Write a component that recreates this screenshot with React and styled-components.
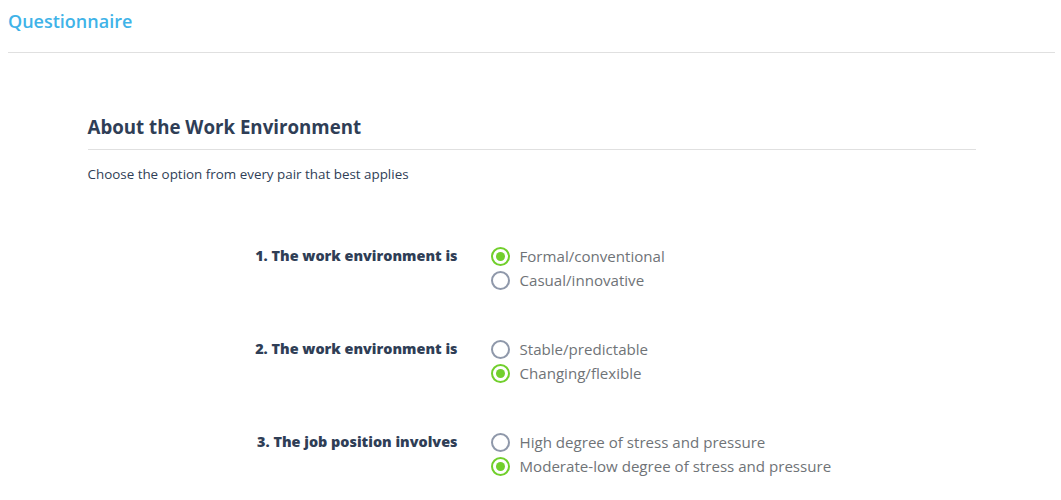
import React, { useState } from "react";
import styled, { createGlobalStyle } from "styled-components";

const questions = [
  {
    id: 1,
    label: "1. The work environment is",
    options: ["Formal/conventional", "Casual/innovative"],
    selected: 0,
  },
  {
    id: 2,
    label: "2. The work environment is",
    options: ["Stable/predictable", "Changing/flexible"],
    selected: 1,
  },
  {
    id: 3,
    label: "3. The job position involves",
    options: ["High degree of stress and pressure", "Moderate-low degree of stress and pressure"],
    selected: 1,
  },
];

const App = () => {
  const [answers, setAnswers] = useState(
    Object.fromEntries(questions.map((q) => [q.id, q.selected]))
  );

  return (
    <>
      <GlobalStyle />
      <Page>
        <TopBar>
          <PageTitle>Questionnaire</PageTitle>
        </TopBar>

        <Section>
          <SectionTitle>About the Work Environment</SectionTitle>
          <Instruction>Choose the option from every pair that best applies</Instruction>

          <QuestionList>
            {questions.map((q) => (
              <QuestionRow key={q.id}>
                <QuestionLabel>{q.label}</QuestionLabel>
                <Options>
                  {q.options.map((opt, i) => (
                    <Option key={opt} onClick={() => setAnswers({ ...answers, [q.id]: i })}>
                      <Radio $checked={answers[q.id] === i} />
                      <OptionText>{opt}</OptionText>
                    </Option>
                  ))}
                </Options>
              </QuestionRow>
            ))}
          </QuestionList>
        </Section>
      </Page>
    </>
  );
};

export default App;

// ===== styles =====
const GlobalStyle = createGlobalStyle`
  html, body { margin: 0; padding: 0; background: #fff; }
  body {
    font-family: "Open Sans", "Noto Sans", "Liberation Sans", sans-serif;
    color: #2f3e56;
    -webkit-font-smoothing: antialiased;
  }
`;

const Page = styled.div`
  padding: 0 6px 0 8px;
`;

const TopBar = styled.div`
  height: 53px;
  box-sizing: border-box;
  padding-top: 8px;
  border-bottom: 1px solid #e0e0e0;
`;

const PageTitle = styled.h1`
  margin: 0;
  font-size: 18px;
  line-height: 26px;
  font-weight: 600;
  color: #3fb3e8;
`;

const Section = styled.div`
  max-width: 888px;
  margin: 0 auto;
  padding-top: 62px;
`;

const SectionTitle = styled.h2`
  margin: 0;
  font-size: 18.7px;
  font-weight: 700;
  color: #2f3e56;
  padding-bottom: 10px;
  border-bottom: 1px solid #e0e0e0;
  line-height: 24px;
`;

const Instruction = styled.p`
  margin: 15px 0 0;
  font-size: 13.4px;
  line-height: 18px;
  color: #2f3e56;
`;

const QuestionList = styled.div`
  display: grid;
  gap: 45px;
  margin-top: 61px;
`;

const QuestionRow = styled.div`
  display: grid;
  grid-template-columns: 370px 1fr;
  column-gap: 33px;
  align-items: start;
`;

const QuestionLabel = styled.div`
  text-align: right;
  font-size: 14.4px;
  font-weight: 800;
  line-height: 24px;
  color: #2f3e56;
`;

const Options = styled.div`
  display: grid;
`;

const Option = styled.label`
  display: flex;
  align-items: center;
  gap: 10px;
  height: 24px;
  cursor: pointer;
`;

const Radio = styled.span`
  width: 19px;
  height: 19px;
  box-sizing: border-box;
  border-radius: 50%;
  border: ${(p) => (p.$checked ? "2px solid #71cf2c" : "2px solid #8f98aa")};
  display: grid;
  place-items: center;
  flex: 0 0 auto;

  &::after {
    content: "";
    width: 9px;
    height: 9px;
    border-radius: 50%;
    background: #71cf2c;
    display: ${(p) => (p.$checked ? "block" : "none")};
  }
`;

const OptionText = styled.span`
  font-size: 15.1px;
  color: #6f7377;
  line-height: 24px;
`;
